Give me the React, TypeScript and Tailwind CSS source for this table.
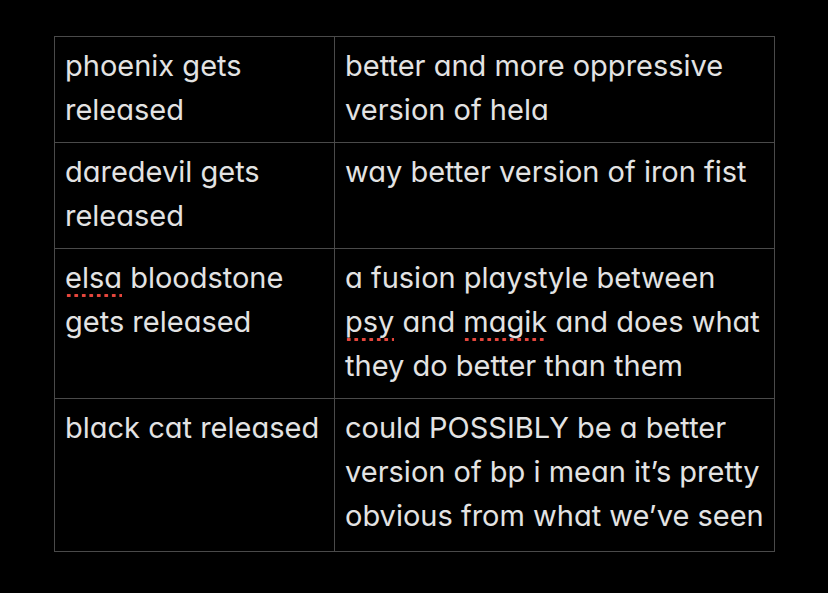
import React from "react";

function Typo(props: { children: React.ReactNode }) {
  return (
    <span className="bg-[radial-gradient(circle,#e8473d_1.7px,transparent_2px)] bg-[length:7.5px_5px] bg-repeat-x bg-[position:0_100%] pb-[3px]">
      {props.children}
    </span>
  );
}

const rows: [React.ReactNode, React.ReactNode][] = [
  ["phoenix gets released", "better and more oppressive version of hela"],
  ["daredevil gets released", "way better version of iron fist"],
  [
    <>
      <Typo>elsa</Typo> bloodstone gets released
    </>,
    <>
      a fusion playstyle between <Typo>psy</Typo> and <Typo>magik</Typo> and does what they do better than them
    </>,
  ],
  [
    "black cat released",
    "could POSSIBLY be a better version of bp i mean it\u2019s pretty obvious from what we\u2019ve seen",
  ],
];

export default function App() {
  return (
    <div className="w-[828px] h-[593px] bg-black pt-[36px] pl-[54px] font-['Inter',sans-serif] [font-feature-settings:'cv11'] text-[#e3e3e3] text-[29px] leading-[44px]">
      <table className="border-collapse w-[720px] table-fixed">
        <colgroup>
          <col className="w-[280px]" />
          <col className="w-[440px]" />
        </colgroup>
        <tbody>
          {rows.map((r, i) => {
            const cell =
              "border border-[#4a4a4a] align-top px-[10px] pt-[7px] " +
              (i === rows.length - 1 ? "pb-[13px]" : "pb-[10px]");
            return (
              <tr key={i}>
                <td className={cell}>{r[0]}</td>
                <td className={cell}>{r[1]}</td>
              </tr>
            );
          })}
        </tbody>
      </table>
    </div>
  );
}
